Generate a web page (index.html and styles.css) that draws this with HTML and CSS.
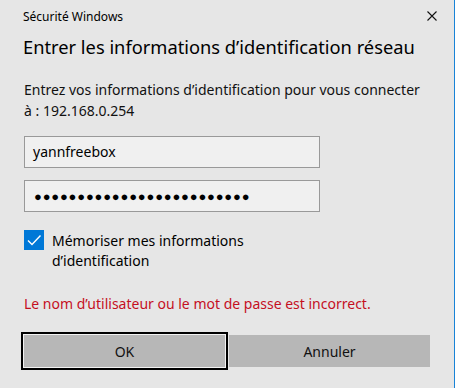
FILE: index.html
```html
<!DOCTYPE html>
<html lang="fr">
<head>
  <meta charset="UTF-8">
  <title>Sécurité Windows</title>
  <link rel="stylesheet" href="styles.css">
</head>
<body>

  <div class="window">
    <!-- Barre de titre -->
    <div class="titlebar">
      <span class="app-name">Sécurité Windows</span>
      <svg class="close" width="10" height="10" viewBox="0 0 10 10">
        <path d="M0.5 0.5 L9.5 9.5 M9.5 0.5 L0.5 9.5" stroke="#111" stroke-width="1.1" fill="none"/>
      </svg>
    </div>

    <h1 class="heading">Entrer les informations d’identification réseau</h1>

    <p class="intro">Entrez vos informations d’identification pour vous connecter à : 192.168.0.254</p>

    <div class="fields">
      <div class="field">yannfreebox</div>
      <div class="field dots">●●●●●●●●●●●●●●●●●●●●●●●●●</div>
    </div>

    <div class="remember">
      <span class="checkbox">
        <svg width="20" height="20" viewBox="0 0 20 20">
          <path d="M4 10.5 L8 14.5 L16.5 5.5" stroke="#fff" stroke-width="1.4" fill="none"/>
        </svg>
      </span>
      <span class="remember-label">Mémoriser mes informations<br>d’identification</span>
    </div>

    <p class="error">Le nom d’utilisateur ou le mot de passe est incorrect.</p>

    <div class="buttons">
      <button class="btn btn-default">OK</button>
      <button class="btn">Annuler</button>
    </div>
  </div>

</body>
</html>
```

FILE: styles.css
```css
body {
  margin: 0;
  background-color: #e6e6e6;
  font-family: "Noto Sans", "Open Sans", sans-serif;
  color: #000;
}

.window {
  height: 388px;
  box-sizing: border-box;
  border-right: 1px solid #1883d7;
  padding: 0 0 0 24px;
}

/* --- Barre de titre --- */
.titlebar {
  display: flex;
  justify-content: space-between;
  align-items: center;
  height: 32px;
  padding-right: 17px;
  margin-left: -1px;
}

.app-name {
  font-size: 12px;
}

.close {
  display: block;
}

.heading {
  margin: 1px 0 0 -1px;
  font-size: 18.3px;
  font-weight: 400;
  line-height: 28px;
  white-space: nowrap;
}

.intro {
  margin: 18px 0 0;
  width: 400px;
  font-size: 14px;
  line-height: 21px;
  color: #111;
}

/* --- Champs --- */
.fields {
  margin-top: 15px;
  display: flex;
  flex-direction: column;
  gap: 12px;
}

.field {
  width: 296px;
  height: 32px;
  box-sizing: border-box;
  border: 1px solid #999;
  background-color: #f0f0f0;
  padding: 0 8px;
  font-size: 14px;
  line-height: 30px;
}

.dots {
  font-size: 13px;
  letter-spacing: 0.8px;
  padding-left: 9px;
}

/* --- Case à cocher --- */
.remember {
  margin-top: 18px;
  display: flex;
  align-items: flex-start;
  gap: 8px;
}

.checkbox {
  width: 20px;
  height: 20px;
  background-color: #0078d7;
  flex-shrink: 0;
}

.checkbox svg {
  display: block;
}

.remember-label {
  font-size: 14px;
  line-height: 20px;
  margin-top: 1px;
}

.error {
  margin: 23px 0 0;
  font-size: 14px;
  line-height: 20px;
  color: #c50f1f;
}

/* --- Boutons --- */
.buttons {
  margin-top: 21px;
  display: flex;
  gap: 4px;
}

.btn {
  width: 201px;
  height: 32px;
  border: none;
  background-color: #b7b7b7;
  font-family: inherit;
  font-size: 14px;
  color: #111;
  padding: 0;
}

.btn-default {
  box-shadow: 0 0 0 1px #f2f2f2, 0 0 0 3px #000;
}
```
